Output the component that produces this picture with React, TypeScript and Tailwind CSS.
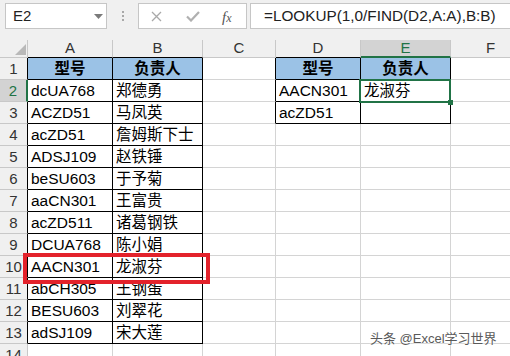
import React from "react";

const font = "font-['Liberation_Sans','Noto_Sans_CJK_SC',sans-serif]";

const colA = ["型号", "dcUA768", "ACZD51", "acZD51", "ADSJ109", "beSU603", "aaCN301", "acZD511", "DCUA768", "AACN301", "abCH305", "BESU603", "adSJ109"];
const colB = ["负责人", "郑德勇", "马凤英", "詹姆斯下士", "赵铁锤", "于予菊", "王富贵", "诸葛钢铁", "陈小娟", "龙淑芬", "王钢蛋", "刘翠花", "宋大莲"];
const colD = ["型号", "AACN301", "acZD51"];
const colE = ["负责人", "龙淑芬", ""];
const letters = ["", "A", "B", "C", "D", "E", "F"];

function inTable(r: number, c: number) {
  if (r >= 1 && r <= 13 && (c === 1 || c === 2)) return true;
  if (r >= 1 && r <= 3 && (c === 4 || c === 5)) return true;
  return false;
}

function cellText(r: number, c: number) {
  if (c === 1) return colA[r - 1] ?? "";
  if (c === 2) return colB[r - 1] ?? "";
  if (c === 4) return colD[r - 1] ?? "";
  if (c === 5) return colE[r - 1] ?? "";
  return "";
}

function Toolbar() {
  return (
    <div className="flex h-[40px] bg-[#f0f0f0] pl-[5px] pt-[3px]">
      <div className="relative flex h-[26px] w-[102px] items-center border border-[#c6c6c6] bg-white pl-[7px] text-[15px] text-[#222]">
        E2
        <svg className="absolute left-[88px] top-[10px]" width="9" height="5" viewBox="0 0 9 5">
          <path d="M0 0h9L4.5 5z" fill="#7a7a7a" />
        </svg>
      </div>
      <div className="flex w-[31px] flex-col items-center gap-[2px] pt-[8px]">
        <div className="h-[2px] w-[2px] bg-[#a8a8a8]" />
        <div className="h-[2px] w-[2px] bg-[#a8a8a8]" />
        <div className="h-[2px] w-[2px] bg-[#a8a8a8]" />
      </div>
      <div className="relative h-[26px] w-[109px] border border-[#c6c6c6] bg-white">
        <svg className="absolute left-[12px] top-[7px]" width="11" height="11" viewBox="0 0 11 11">
          <path d="M1 1l9 9M10 1l-9 9" stroke="#a9a9a9" strokeWidth="1.3" fill="none" />
        </svg>
        <svg className="absolute left-[47px] top-[7px]" width="14" height="11" viewBox="0 0 14 11">
          <path d="M1 5.5l4 4L13 1" stroke="#b0b0b0" strokeWidth="2.2" fill="none" />
        </svg>
        <span className="absolute left-[83px] top-[2px] font-['Liberation_Serif',serif] text-[15px] italic text-[#555]">
          f<span className="text-[12px]">x</span>
        </span>
      </div>
      <div className="ml-[3px] flex h-[26px] flex-1 items-center border border-r-0 border-[#c6c6c6] bg-white pl-[13px] text-[15.3px] text-[#222]">
        =LOOKUP(1,0/FIND(D2,A:A),B:B)
      </div>
    </div>
  );
}

function Sheet() {
  const cells: React.ReactNode[] = [];
  // column header row
  for (let c = 0; c < 7; c++) {
    if (c === 0) {
      cells.push(
        <div key="h0" className="relative border-r border-b border-r-[#c8c8c8] border-b-[#c8c8c8] bg-[#f0f0f0]">
          <svg className="absolute left-[15px] top-[4px]" width="11" height="11" viewBox="0 0 11 11">
            <path d="M11 0v11H0z" fill="#b9b9b9" />
          </svg>
        </div>
      );
      continue;
    }
    const sel = c === 5;
    const bottom = sel
      ? "border-b-2 border-b-[#217346]"
      : inTable(1, c)
      ? "border-b border-b-black"
      : "border-b border-b-[#c8c8c8]";
    cells.push(
      <div
        key={"h" + c}
        className={`flex items-center justify-center border-r border-r-[#c8c8c8] text-[15px] ${bottom} ${
          sel ? "bg-[#d3d3d3] text-[#217346]" : "bg-[#f0f0f0] text-[#333]"
        }`}
      >
        {letters[c]}
      </div>
    );
  }
  for (let r = 1; r <= 14; r++) {
    for (let c = 0; c < 7; c++) {
      if (c === 0) {
        const sel = r === 2;
        const right = sel
          ? "border-r-2 border-r-[#217346]"
          : inTable(r, 1)
          ? "border-r border-r-black"
          : "border-r border-r-[#c8c8c8]";
        cells.push(
          <div
            key={r + "-0"}
            className={`flex items-center justify-center border-b border-b-[#c8c8c8] pt-[2px] text-[15px] ${right} ${
              sel ? "bg-[#d3d3d3] text-[#217346]" : "bg-[#f0f0f0] text-[#333]"
            }`}
          >
            {r}
          </div>
        );
        continue;
      }
      const rb = inTable(r, c) || inTable(r, c + 1);
      const bb = inTable(r, c) || inTable(r + 1, c);
      const head = r === 1 && inTable(r, c);
      cells.push(
        <div
          key={r + "-" + c}
          className={`flex items-center overflow-hidden whitespace-nowrap border-r border-b pt-[1px] text-[15.5px] text-black ${
            rb ? "border-r-black" : "border-r-[#d4d4d4]"
          } ${bb ? "border-b-black" : "border-b-[#d4d4d4]"} ${
            head ? "justify-center bg-[#9bc2e6] font-bold" : "bg-white pl-[3px]"
          }`}
        >
          {cellText(r, c)}
        </div>
      );
    }
  }
  return (
    <div className="relative grid grid-cols-[28px_85px_90px_73px_85px_90px_80px] grid-rows-[18px_repeat(14,22px)]">
      {cells}
      <div className="absolute left-[359px] top-[39px] h-[24px] w-[92px] border-2 border-[#217346]" />
      <div className="absolute left-[448px] top-[60px] h-[5px] w-[5px] bg-[#217346]" />
      <div className="absolute left-[23px] top-[213px] h-[31px] w-[187px] border-4 border-[#e3222b]" />
    </div>
  );
}

export default function App() {
  return (
    <div className={`relative h-[356px] w-[510px] overflow-hidden bg-white ${font}`}>
      <Toolbar />
      <Sheet />
      <div className="absolute left-[370px] top-[329px] text-[13px] text-[#5a5a5a] [text-shadow:0_0_2px_#fff,0_0_2px_#fff]">
        头条 @Excel学习世界
      </div>
    </div>
  );
}
